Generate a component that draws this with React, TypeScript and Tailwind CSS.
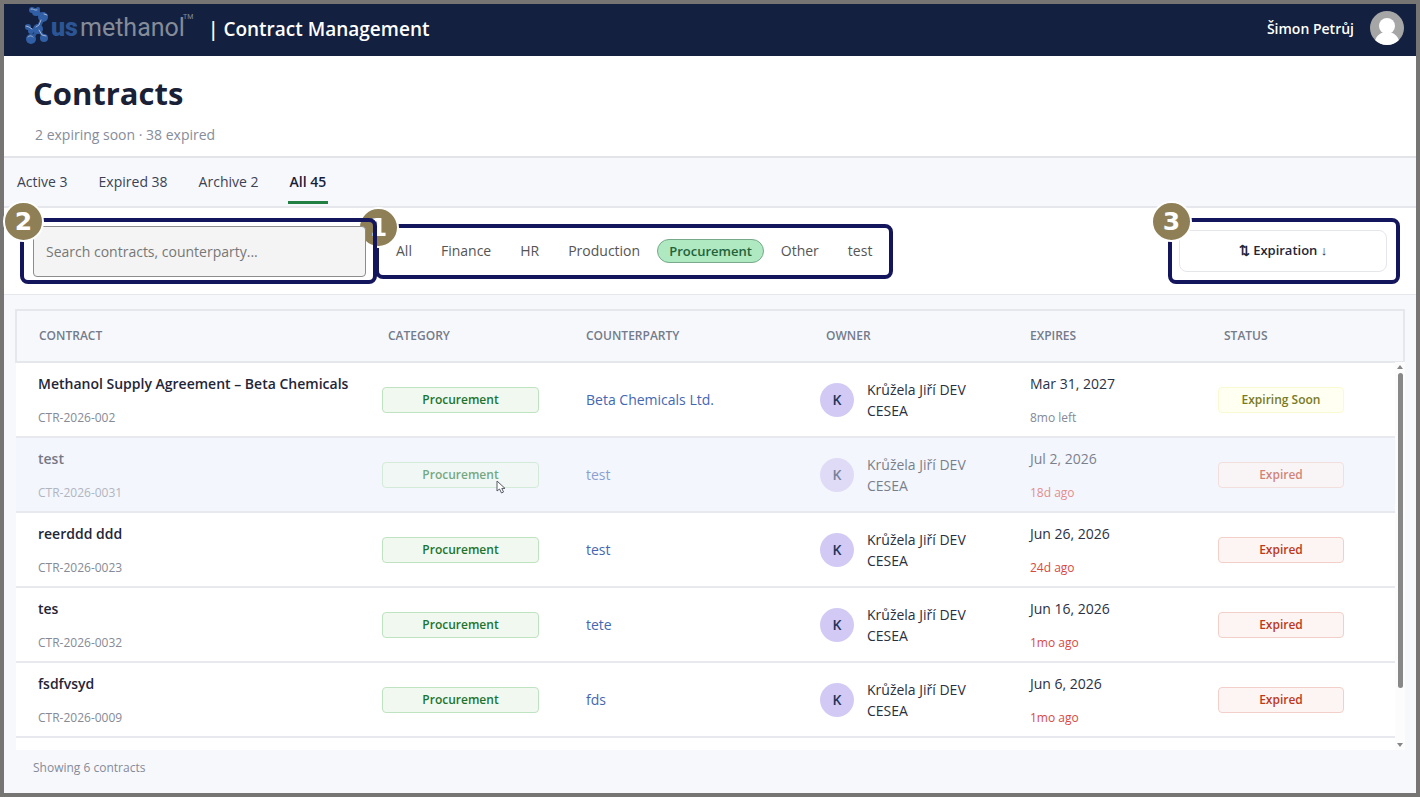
import React, { useState } from 'react';

interface Contract {
  title: string;
  code: string;
  counterparty: string;
  expires: string;
  remaining: string;
  expired: boolean;
}

const contracts: Contract[] = [
  {
    title: 'Methanol Supply Agreement – Beta Chemicals',
    code: 'CTR-2026-002',
    counterparty: 'Beta Chemicals Ltd.',
    expires: 'Mar 31, 2027',
    remaining: '8mo left',
    expired: false
  },
  { title: 'test', code: 'CTR-2026-0031', counterparty: 'test', expires: 'Jul 2, 2026', remaining: '18d ago', expired: true },
  { title: 'reerddd ddd', code: 'CTR-2026-0023', counterparty: 'test', expires: 'Jun 26, 2026', remaining: '24d ago', expired: true },
  { title: 'tes', code: 'CTR-2026-0032', counterparty: 'tete', expires: 'Jun 16, 2026', remaining: '1mo ago', expired: true },
  { title: 'fsdfvsyd', code: 'CTR-2026-0009', counterparty: 'fds', expires: 'Jun 6, 2026', remaining: '1mo ago', expired: true }
];

const tabs = ['Active 3', 'Expired 38', 'Archive 2', 'All 45'];
const categories = ['All', 'Finance', 'HR', 'Production', 'Procurement', 'Other', 'test'];
const columns = ['Contract', 'Category', 'Counterparty', 'Owner', 'Expires', 'Status'];

const Logo: React.FC = () => (
  <svg className="h-[44px] w-[172px] overflow-visible" viewBox="0 0 172 44" role="img" aria-label="US Methanol">
    <g fill="#2d5799" stroke="#2d5799" strokeLinecap="round" strokeLinejoin="round">
      <path d="M10 4 L19 9 L17 15 L14 21" strokeWidth="4" fill="none" />
      <path d="M3 20 L8 24 L14 21 M14 22 L8 32 M14 22 L20 30" strokeWidth="3" fill="none" />
    </g>
    <g fill="#315fa6">
      <circle cx="8" cy="3" r="3" />
      <circle cx="12" cy="5" r="4" />
      <circle cx="14" cy="2" r="2" />
      <circle cx="19" cy="10" r="5" />
      <circle cx="14" cy="22" r="5" />
      <circle cx="4" cy="20" r="3" />
      <circle cx="7" cy="32" r="5" />
      <circle cx="20" cy="31" r="4" />
      <circle cx="7" cy="24" r="3" />
    </g>
    <g stroke="#a3b4d4" strokeWidth="1" strokeLinecap="round" fill="none">
      <path d="M7 2 C9 1 10 4 13 3" />
      <path d="M20 7 L23 8" />
      <path d="M17 13 L15 18 L12 20" />
      <path d="M2 19 L5 20 L8 22" />
      <path d="M4 30 C6 28 8 29 9 30" />
      <path d="M15 23 L18 28 L22 29" />
    </g>
    <text x="27" y="29" fontFamily="Roboto, sans-serif" fontSize="25" fontWeight="900" fill="#2c5596">us</text>
    <text x="56" y="29" fontFamily="Roboto, sans-serif" fontSize="25" fontWeight="400" fill="#858c99">methanol</text>
    <text x="159" y="12" fontFamily="Roboto, sans-serif" fontSize="7" fill="#858c99">TM</text>
  </svg>
);

const UserAvatar: React.FC = () => (
  <svg className="mb-[3px] size-[34px]" viewBox="0 0 34 34" aria-hidden="true">
    <defs>
      <clipPath id="avatar-clip">
        <circle cx="17" cy="17" r="17" />
      </clipPath>
    </defs>
    <g clipPath="url(#avatar-clip)">
      <rect width="34" height="34" fill="#a6a6a6" />
      <circle cx="17" cy="15" r="8" fill="#fff" />
      <path d="M4 34 C5 25 10 21 17 21 C24 21 29 25 30 34 Z" fill="#fff" />
    </g>
  </svg>
);

// Numbered marker sitting on the corner of a highlighted area
const Marker: React.FC<{ label: string }> = ({ label }) => (
  <span className="pointer-events-none absolute -left-[21px] -top-[21px] flex size-[41px] items-center justify-center rounded-full border-2 border-white bg-[#8f7f56] font-['DejaVu_Sans',sans-serif] text-[25px] font-bold leading-none text-white">
    {label}
  </span>
);

const ContractRow: React.FC<{ contract: Contract; hovered: boolean }> = ({ contract, hovered }) => {
  const fade = hovered ? 'opacity-60' : '';

  return (
    <tr className={`h-[75px] border-b-2 border-[#e8e9ee] ${hovered ? 'bg-[#f3f6fd]' : 'bg-white'}`}>
      <td className="pl-[22px]">
        <div className={`pt-[2px] ${fade}`}>
          <div className="text-sm font-semibold leading-5 text-[#1f2638]">{contract.title}</div>
          <div className="mt-[14px] text-xs leading-5 text-[#858a96]">{contract.code}</div>
        </div>
      </td>
      <td className="pl-4">
        <div className="relative w-[157px]">
          <div className={`rounded border border-[#bfe3c0] bg-[#f0f8ef] text-center text-xs font-semibold leading-6 text-[#1c7430] ${fade}`}>
            Procurement
          </div>
          {hovered && (
            <svg className="absolute left-[114px] top-[18px] h-[14px] w-[10px]" viewBox="0 0 10 14" aria-hidden="true">
              <path d="M1 1 V11 L3.5 9 L5.5 13 L7.5 12 L5.8 8.4 H9 Z" fill="#fff" stroke="#555b66" />
            </svg>
          )}
        </div>
      </td>
      <td className="pl-[22px]">
        <a href="#" className={`block text-sm text-[#4467b3] ${fade}`}>{contract.counterparty}</a>
      </td>
      <td className="pl-4">
        <div className={`flex items-center gap-[13px] ${fade}`}>
          <span className="flex size-[34px] items-center justify-center rounded-full bg-[#d2caf4] text-sm font-semibold text-[#26345a]">K</span>
          <span className="w-[110px] text-sm leading-[21px] text-[#2a3040]">Krůžela Jiří DEV CESEA</span>
        </div>
      </td>
      <td className="pl-[22px]">
        <div className={`pt-[2px] ${fade}`}>
          <div className="text-sm leading-5 text-[#2a3145]">{contract.expires}</div>
          <div className={`mt-[14px] text-xs leading-5 ${contract.expired ? 'text-[#d9483f]' : 'text-[#858a96]'}`}>
            {contract.remaining}
          </div>
        </div>
      </td>
      <td className="pl-4">
        <div
          className={`w-[126px] rounded border text-center text-xs font-semibold leading-6 ${fade} ${
            contract.expired
              ? 'border-[#f2cfc8] bg-[#fdf5f3] text-[#bb3a1b]'
              : 'border-[#fafad2] bg-[#fffff2] text-[#787a25]'
          }`}
        >
          {contract.expired ? 'Expired' : 'Expiring Soon'}
        </div>
      </td>
    </tr>
  );
};

const App: React.FC = () => {
  const [activeTab, setActiveTab] = useState('All 45');
  const [category, setCategory] = useState('Procurement');
  const [search, setSearch] = useState('');

  return (
    <div className="flex min-h-screen flex-col border-4 border-[#767573] bg-[#f7f8fc] font-['Open_Sans','Noto_Sans',sans-serif]">
      <header className="flex h-[52px] items-center bg-[#13203f] pb-[2px] pl-5 pr-3 text-white">
        <Logo />
        <span className="ml-3 text-[19px] font-semibold">| Contract Management</span>
        <span className="ml-auto mr-4 text-sm font-semibold">Šimon Petrůj</span>
        <UserAvatar />
      </header>

      <section className="border-b-2 border-[#e3e4ea] bg-white pb-2 pl-[29px] pt-[14px]">
        <h1 className="text-[31px] font-bold leading-[46px] text-[#1a2035]">Contracts</h1>
        <p className="pb-[3px] pl-[2px] pt-[9px] text-sm leading-5 text-[#868c9a]">2 expiring soon · 38 expired</p>
      </section>

      <nav className="flex h-[50px] gap-[27px] border-b-2 border-[#e6e7ec] pl-[11px]">
        {tabs.map((tab) => (
          <button
            key={tab}
            className={`mb-[2px] border-b-[3px] px-[2px] pt-1 text-sm ${
              tab === activeTab ? 'border-[#228044] font-semibold text-[#171f3c]' : 'border-transparent text-[#3b4253]'
            }`}
            onClick={() => setActiveTab(tab)}
          >
            {tab}
          </button>
        ))}
      </nav>

      <section className="flex h-[87px] items-center border-b border-[#e6e7ec] bg-white pl-[29px] pr-[29px]">
        <div className="relative z-20">
          <input
            type="text"
            aria-label="Search contracts"
            placeholder="Search contracts, counterparty..."
            value={search}
            onChange={(e) => setSearch(e.target.value)}
            className="block h-[51px] w-[333px] rounded border border-[#8c8c8c] bg-[#f4f4f4] px-3 text-sm text-[#333] placeholder:text-[#777]"
          />
          <div className="pointer-events-none absolute -bottom-[7px] -left-[13px] -right-[11px] -top-2 rounded-lg border-4 border-[#13165d]">
            <Marker label="2" />
          </div>
        </div>

        <div className="relative z-10 ml-[9px] flex h-[55px] items-center gap-[5px] px-[9px]">
          {categories.map((item) => (
            <button
              key={item}
              className={`rounded-full border px-[11px] leading-[22px] ${
                item === category
                  ? 'border-[#77a98a] bg-[#aee9c1] text-[13px] font-semibold text-[#22623b]'
                  : 'border-transparent text-sm leading-[22px] text-[#555]'
              }`}
              onClick={() => setCategory(item)}
            >
              {item}
            </button>
          ))}
          <div className="pointer-events-none absolute inset-0 rounded-lg border-4 border-[#13165d]">
            <Marker label="1" />
          </div>
        </div>

        <div className="relative ml-auto">
          <button className="block h-[42px] w-[208px] rounded-lg border border-[#e5e6ea] bg-white text-[13px] font-semibold text-[#1f2638]">
            ⇅ Expiration ↓
          </button>
          <div className="pointer-events-none absolute -bottom-3 -left-[11px] -right-[13px] -top-3 rounded-lg border-4 border-[#13165d]">
            <Marker label="3" />
          </div>
        </div>
      </section>

      <main className="relative ml-[11px] mr-[11px] mt-[14px]">
        <table className="w-full table-fixed border-collapse text-left">
          <colgroup>
            <col className="w-[350px]" />
            <col className="w-[198px]" />
            <col className="w-[240px]" />
            <col className="w-[204px]" />
            <col className="w-[194px]" />
            <col />
          </colgroup>
          <thead>
            <tr className="h-[52px] border-2 border-[#e6e7ec]">
              {columns.map((column) => (
                <th key={column} className="pl-[22px] text-xs font-semibold uppercase text-[#747b8b]">{column}</th>
              ))}
            </tr>
          </thead>
          <tbody>
            {contracts.map((contract, index) => (
              <ContractRow key={contract.code} contract={contract} hovered={index === 1} />
            ))}
            <tr className="h-[13px] bg-white" aria-hidden="true">
              <td colSpan={6} />
            </tr>
          </tbody>
        </table>

        {/* Scroll track over the right edge of the rows */}
        <div className="absolute bottom-0 right-0 top-[53px] flex w-[10px] flex-col items-center bg-[#fcfcfd] py-[2px]" aria-hidden="true">
          <svg className="h-[6px] w-[6px]" viewBox="0 0 6 6"><path d="M3 1 L6 5 H0 Z" fill="#868686" /></svg>
          <div className="mt-[3px] h-[315px] w-[5px] rounded-full bg-[#888]" />
          <svg className="mt-auto h-[6px] w-[6px]" viewBox="0 0 6 6"><path d="M3 5 L6 1 H0 Z" fill="#868686" /></svg>
        </div>
      </main>

      <footer className="px-[29px] pt-2 text-xs leading-5 text-[#858b99]">Showing 6 contracts</footer>
    </div>
  );
};

export default App;
